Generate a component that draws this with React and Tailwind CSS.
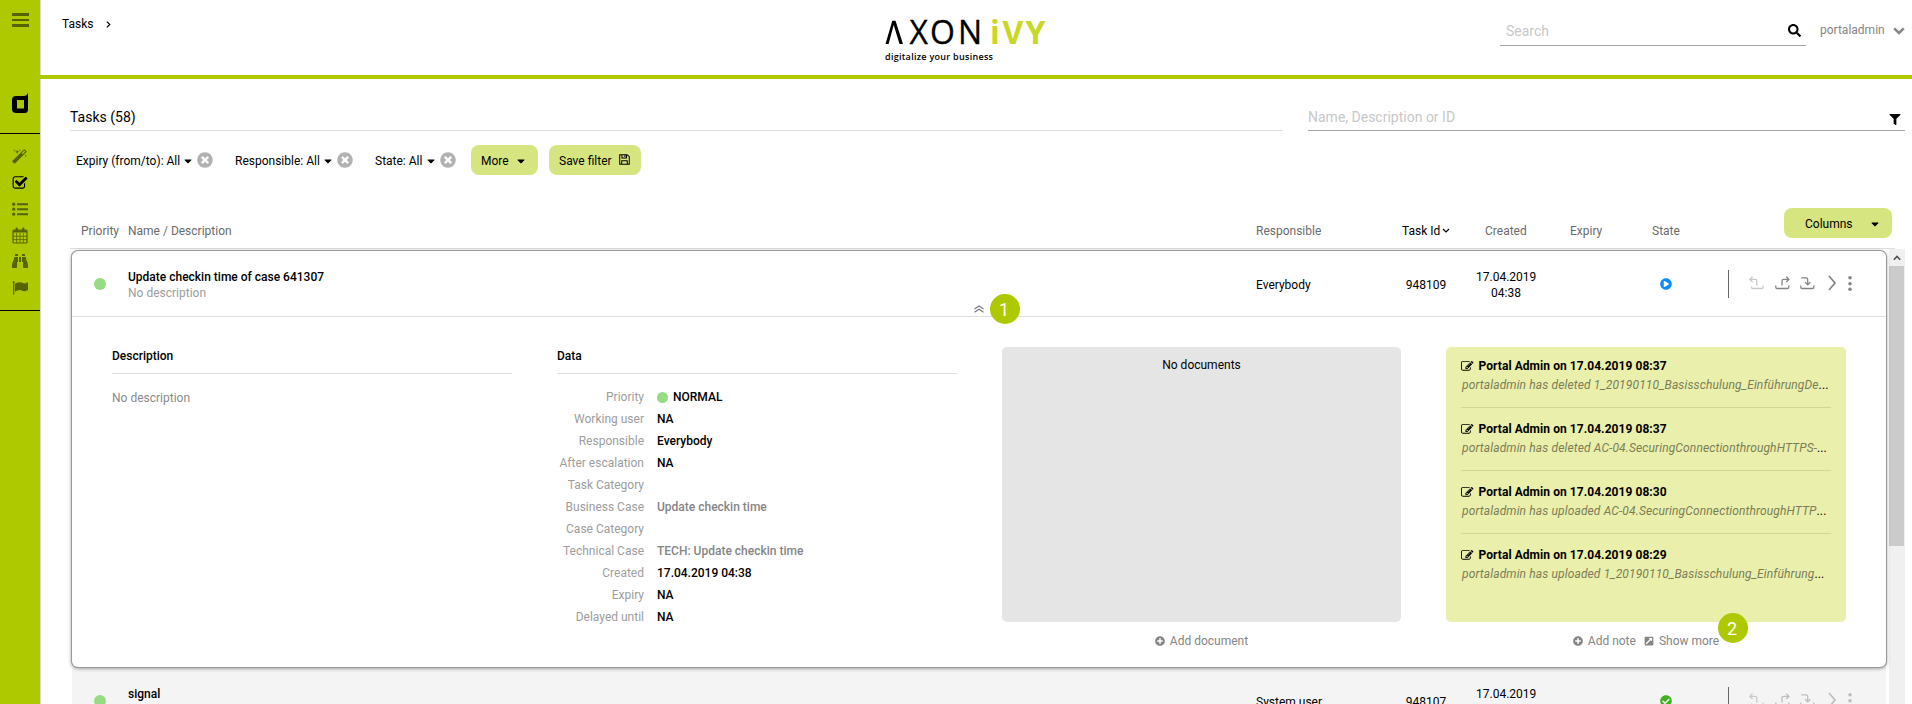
import React from "react";
import { FaBinoculars, FaSearch, FaFilter, FaTimesCircle, FaPlusCircle, FaExternalLinkSquareAlt, FaCaretDown, FaPlayCircle, FaCheckCircle } from "react-icons/fa";

const MAGIC = "M1190 581l293-293-107-107-293 293zm447-293q0 27-18 45l-1286 1286q-18 18-45 18t-45-18l-198-198q-18-18-18-45t18-45l1286-1286q18-18 45-18t45 18l198 198q18 18 18 45zm-1351-190l98 30-98 30-30 98-30-98-98-30 98-30 30-98zm350 162l196 60-196 60-60 196-60-196-196-60 196-60 60-196zm930 478l98 30-98 30-30 98-30-98-98-30 98-30 30-98zm-640-640l98 30-98 30-30 98-30-98-98-30 98-30 30-98z";
const CHECK_SQUARE = "M1472 930v318q0 119-84.5 203.5t-203.500 84.500h-832q-119 0-203.500-84.500t-84.500-203.500v-832q0-119 84.500-203.500t203.500-84.500h832q63 0 117 25 15 7 18 23 3 17-9 29l-49 49q-10 10-23 10-3 0-9-2-23-6-45-6h-832q-66 0-113 47t-47 113v832q0 66 47 113t113 47h832q66 0 113-47t47-113v-254q0-13 9-22l64-64q10-10 23-10 6 0 12 3 20 8 20 29zm231-489l-814 814q-24 24-57 24t-57-24l-430-430q-24-24-24-57t24-57l110-110q24-24 57-24t57 24l263 263 647-647q24-24 57-24t57 24l110 110q24 24 24 57t-24 57z";
const EDIT = "M888 1184l116-116-152-152-116 116v56h96v96h56zm440-720q-16-16-33 1l-350 350q-17 17-1 33t33-1l350-350q17-17 1-33zm80 594v190q0 119-84.500 203.500t-203.500 84.500h-832q-119 0-203.500-84.500t-84.500-203.500v-832q0-119 84.500-203.500t203.500-84.500h832q63 0 117 25 15 7 18 23 3 17-9 29l-49 49q-14 14-32 8-23-6-45-6h-832q-66 0-113 47t-47 113v832q0 66 47 113t113 47h832q66 0 113-47t47-113v-126q0-13 9-22l64-64q15-15 35-7t20 29zm-96-738l288 288-672 672h-288v-288zm444 132l-92 92-288-288 92-92q28-28 68-28t68 28l152 152q28 28 28 68t-28 68z";
const FLAG = "M320 256q0 72-64 110v1266q0 13-9.500 22.500t-22.500 9.500h-64q-13 0-22.500-9.500t-9.500-22.500v-1266q-64-38-64-110 0-53 37.500-90.500t90.500-37.500 90.500 37.500 37.500 90.500zm1472 64v763q0 25-12.500 38.500t-39.500 27.500q-215 116-369 116-61 0-123.500-22t-108.500-48-115.500-48-142.500-22q-192 0-464 146-17 9-33 9-26 0-45-19t-19-45v-742q0-32 31-55 21-14 79-43 236-120 421-120 107 0 200 29t219 88q38 19 88 19 54 0 117.500-21t110-47 88-47 54.500-21q26 0 45 19t19 45z";

function Glyph({ d, className }) {
  return (
    <svg viewBox="0 0 1792 1792" className={className} fill="currentColor">
      <path d={d} />
    </svg>
  );
}

function ListIcon({ className }) {
  return (
    <svg viewBox="0 0 16 14" className={className} fill="currentColor">
      <circle cx="1.700" cy="2.200" r="1.600" />
      <circle cx="1.700" cy="7.200" r="1.600" />
      <circle cx="1.700" cy="12.200" r="1.600" />
      <path d="M5 1.200h11v2H5zM5 6.200h11v2H5zM5 11.200h11v2H5z" />
    </svg>
  );
}

function Calendar({ className }) {
  return (
    <svg viewBox="0 0 16 17" className={className} fill="none" stroke="currentColor">
      <rect x="1" y="3" width="14" height="13" rx="1" strokeWidth="1.200" />
      <path d="M1 4.400h14" strokeWidth="2.200" />
      <path d="M4.600 6v10M8 6v10M11.400 6v10M1 9.300h14M1 12.600h14" strokeWidth=".8" />
      <path d="M4.700 1.500v2.500M11.300 1.500v2.500" strokeWidth="2.200" strokeLinecap="round" />
    </svg>
  );
}

function Floppy({ className }) {
  return (
    <svg viewBox="0 0 12 12" className={className} fill="none" stroke="currentColor" strokeWidth="1.100">
      <path d="M.8.800h8L11.200 3v8.200H.8zM3 11V7.400h6V11M3.200 1v3.400h5V1M6.500 1.200v2.200" />
    </svg>
  );
}

function Actions({ muted }) {
  return (
    <div className={"flex h-4 items-center " + (muted ? "text-[#bdbdbd]" : "text-[#858585]")}>
      <svg viewBox="0 0 15 15" className="-ml-px h-[15px] w-[15px] text-[#cacaca]" fill="none" stroke="currentColor" strokeWidth="1.300">
        <path d="M3.600.8L.9 3.400l2.700 2.600M1 3.400h5.200q1.600 0 1.600 1.600v4.500" />
        <path d="M2.500 10.500v.7q0 1.300 1.300 1.300h9q1.400 0 1.400-1.300V9.600" />
      </svg>
      <svg viewBox="0 0 15 15" className="ml-[11px] h-[15px] w-[15px]" fill="none" stroke="currentColor" strokeWidth="1.300">
        <path d="M11.200.8l2.700 2.600-2.700 2.600M13.800 3.400H8.600Q7 3.400 7 5v4.500M.8 9.600v1.600q0 1.300 1.400 1.300h10.200q1.400 0 1.400-1.300V9.600" />
      </svg>
      <svg viewBox="0 0 15 15" className="ml-[10px] h-[15px] w-[15px]" fill="none" stroke="currentColor" strokeWidth="1.300">
        <path d="M1.200 1.800h4.900q1.600 0 1.600 1.600v5M5 6.100l2.700 2.700 2.700-2.700M.8 9.600v1.600q0 1.300 1.400 1.300h10.200q1.400 0 1.400-1.300V9.600" />
      </svg>
      <svg viewBox="0 0 9 16" className="ml-[13px] h-4 w-[9px]" fill="none" stroke="currentColor" strokeWidth="1.700">
        <path d="M1 1l6 7-6 7" />
      </svg>
      <svg viewBox="0 0 4 16" className="ml-[11px] h-4 w-1" fill="currentColor">
        <circle cx="2" cy="2.800" r="1.800" />
        <circle cx="2" cy="8.800" r="1.800" />
        <circle cx="2" cy="14.200" r="1.800" />
      </svg>
    </div>
  );
}

function Filter({ label, className }) {
  return (
    <div className={"flex items-center " + className}>
      <span className="flex-1 pt-px">{label}</span>
      <FaCaretDown className="mt-px h-3 w-3" />
      <FaTimesCircle className="ml-[3px] h-4 w-4 text-[#b1b1b1]" />
    </div>
  );
}

const rows = [
  ["Priority", "NORMAL"],
  ["Working user", "NA"],
  ["Responsible", "Everybody"],
  ["After escalation", "NA"],
  ["Task Category", ""],
  ["Business Case", "Update checkin time"],
  ["Case Category", ""],
  ["Technical Case", "TECH: Update checkin time"],
  ["Created", "17.04.2019 04:38"],
  ["Expiry", "NA"],
  ["Delayed until", "NA"],
];

const notes = [
  ["08:37", "portaladmin has deleted 1_20190110_Basisschulung_EinführungDe"],
  ["08:37", "portaladmin has deleted AC-04.SecuringConnectionthroughHTTPS-"],
  ["08:30", "portaladmin has uploaded AC-04.SecuringConnectionthroughHTTP"],
  ["08:29", "portaladmin has uploaded 1_20190110_Basisschulung_Einführung"],
];

function Row({ title, sub, who, id, state, muted }) {
  return (
    <div className="flex h-[65px] items-start pt-[18px] leading-4">
      <div className="mt-[9px] ml-[22px] h-3 w-3 shrink-0 rounded-full bg-[#97dc82]" />
      <div className="ml-[22px] w-[1128px]">
        <div className="font-medium">{title}</div>
        <div className="text-[#9d9d9d]">{sub}</div>
      </div>
      <div className="w-[140px] pt-2">{who}</div>
      <div className="w-[60px] pt-2 text-center">{id}</div>
      <div className="ml-5 w-[60px] text-center">17.04.2019<br />04:38</div>
      <div className="ml-[124px] mt-[9px] w-3">{state}</div>
      <div className="ml-[56px] mt-[1px] h-7 w-px bg-[#666]" />
      <div className="ml-[21px] mt-[6px]"><Actions muted={muted} /></div>
    </div>
  );
}

export default function App() {
  return (
    <div className="flex h-[704px] w-[1912px] overflow-hidden bg-white font-['Roboto',sans-serif] text-[12px] text-black">
      <aside className="flex w-10 shrink-0 flex-col items-center bg-[#aec900] text-[#566400] shadow-[1px_0_1px_rgba(0,0,0,0.15)]">
        <div className="mt-[13px] flex w-[17px] flex-col gap-[3px]">
          <div className="h-[2.500px] bg-current" />
          <div className="h-[2.500px] bg-current" />
          <div className="h-[2.500px] bg-current" />
        </div>
        <svg viewBox="0 0 17 20" className="mt-[66px] h-5 w-[17px] text-black" fill="currentColor" fillRule="evenodd">
          <path d="M16 0v16.500a3.500 3.500 0 0 1-3.500 3.500H4a4 4 0 0 1-4-4V7a4 4 0 0 1 4-4h8C13.500 3 15 1.800 16 0zM5 7v8.500h7V7z" />
        </svg>
        <div className="mt-5 flex h-[178px] w-full flex-col items-center border-y border-black pt-[15px]">
          <Glyph d={MAGIC} className="h-4 w-4" />
          <Glyph d={CHECK_SQUARE} className="mt-[10px] h-4 w-4 text-black" />
          <ListIcon className="mt-[11px] h-[14px] w-4" />
          <Calendar className="mt-[11px] h-[17px] w-4" />
          <FaBinoculars className="mt-[9px] h-4 w-4" />
          <Glyph d={FLAG} className="mt-[11px] h-4 w-4" />
        </div>
      </aside>
      <div className="flex min-w-0 flex-1 flex-col">
        <header className="flex h-[79px] shrink-0 border-b-4 border-[#aec900]">
          <div className="flex w-[845px] items-start pl-[22px] pt-4 leading-4">
            Tasks
            <svg viewBox="0 0 5 7" className="ml-3 mt-[5px] h-[7px] w-[5px]" fill="none" stroke="black" strokeWidth="1.200"><path d="M.8.600l3 2.900-3 2.900" /></svg>
          </div>
          <div className="w-[615px]">
            <svg width="164" height="70" viewBox="0 0 164 70">
              <path d="M.5 44L7.300 20.800h3.200L18 44h-3.500L8.700 25 3.600 44z" />
              <text x="24.500 45 73" y="44" fontFamily="Open Sans" fontSize="32" stroke="black" strokeWidth=".3">XON</text>
              <text x="105 117.500 140.500" y="44" fontFamily="Open Sans" fontSize="32" fontWeight="700" fill="#c8d824">iVY</text>
              <text x="0" y="60" fontFamily="Open Sans" fontSize="9" fontWeight="600" textLength="108">digitalize your business</text>
            </svg>
          </div>
          <div className="mt-[15px] flex h-[31px] w-[306px] items-center border-b border-[#a5a5a5] pl-[6px] pr-[5px] text-[14px]">
            <span className="flex-1 pt-0.5 text-[#c8c8c8]">Search</span>
            <FaSearch className="h-[13px] w-[13px]" />
          </div>
          <div className="ml-[14px] mt-[15px] flex h-[30px] items-center text-[#858585]">
            <span className="w-[73px]">portaladmin</span>
            <svg viewBox="0 0 12 8" className="mt-px h-2 w-3" fill="none" stroke="currentColor" strokeWidth="2.500"><path d="M1.200 1.300L6 6l4.800-4.700" /></svg>
          </div>
        </header>
        <div className="flex h-[52px] shrink-0 gap-[25px] pl-[30px] text-[14px]">
          <div className="w-[1213px] border-b border-[#dedede] pt-[28px] leading-5">Tasks (58)</div>
          <div className="flex w-[597px] justify-between border-b border-[#a5a5a5] pr-1 pt-[28px] leading-5">
            <span className="text-[#c8c8c8]">Name, Description or ID</span>
            <FaFilter className="mt-[7px] h-[11px] w-[12px]" />
          </div>
        </div>
        <div className="mt-[14px] flex h-[30px] shrink-0 items-center pl-9">
          <Filter label="Expiry (from/to): All" className="w-[137px]" />
          <Filter label="Responsible: All" className="ml-[22px] w-[118px]" />
          <Filter label="State: All" className="ml-[22px] w-[81px]" />
          <button className="ml-[15px] flex h-[30px] w-[67px] items-center gap-1.5 rounded-lg bg-[#d7e580] pl-[10px] pt-px">More<FaCaretDown className="h-3 w-3" /></button>
          <button className="ml-[11px] flex h-[30px] w-[92px] items-center gap-[7px] rounded-lg bg-[#d7e580] pl-[10px] pt-px">Save filter<Floppy className="-mt-0.5 h-[11px] w-[11px]" /></button>
        </div>
        <div className="ml-[30px] mt-[33px] flex h-[41px] w-[1825px] shrink-0 border-b border-[#dedede] leading-[46px] text-[#6b6b6b]">
          <div className="w-[58px] pl-[11px]">Priority</div>
          <div className="w-[1128px]">Name / Description</div>
          <div className="w-[146px]">Responsible</div>
          <div className="flex w-[83px] items-start text-black">Task Id
            <svg viewBox="0 0 8 6" className="ml-[2px] mt-5 h-[6px] w-2" fill="none" stroke="black" strokeWidth="1.200"><path d="M1 1l3 3 3-3" /></svg>
          </div>
          <div className="w-[85px]">Created</div>
          <div className="w-[82px]">Expiry</div>
          <div className="w-[132px]">State</div>
          <button className="flex h-[30px] w-[108px] items-center justify-between rounded-lg bg-[#d7e580] pl-[21px] pr-[11px] pt-px leading-4 text-black">Columns<FaCaretDown className="h-3 w-3" /></button>
        </div>
        <div className="flex min-h-0 flex-1 pl-[31px]">
          <div className="w-[1818px] shrink-0 pl-px pt-[2px]">
            <div className="relative z-10 h-[416px] w-[1814px] rounded-[6px] bg-white shadow-[0_0_0_1px_#999,0_1px_4px_rgba(0,0,0,0.5)]">
              <div className="relative border-b border-[#dedede]">
                <Row title="Update checkin time of case 641307" sub="No description" who="Everybody" id="948109" state={<FaPlayCircle className="h-3 w-3 text-[#0a8cff]" />} />
                <svg viewBox="0 0 10 8" className="absolute left-[902px] top-[54px] h-2 w-[10px] text-[#777]" fill="none" stroke="currentColor" strokeWidth="1.100"><path d="M.5 4L5 1l4.500 3M.5 7.200L5 4.200l4.500 3" /></svg>
                <div className="absolute left-[918px] top-[43px] flex h-[30px] w-[30px] items-center justify-center rounded-full bg-[#aec900] pr-0.5 text-[18px] text-white">1</div>
              </div>
              <div className="flex gap-[45px] pl-10 pt-[30px]">
                <section className="w-[400px]">
                  <h3 className="h-[27px] border-b border-[#dedede] font-medium leading-[18px]">Description</h3>
                  <p className="mt-[15px] leading-[18px] text-[#8a8a8a]">No description</p>
                </section>
                <section className="w-[400px]">
                  <h3 className="mb-3 h-[27px] border-b border-[#dedede] font-medium leading-[18px]">Data</h3>
                  {rows.map(([k, v]) => (
                    <div key={k} className="flex h-[22px] items-center">
                      <span className="w-[87px] text-right text-[#9d9d9d]">{k}</span>
                      {k === "Priority" && <span className="-mr-2 ml-[13px] h-[11px] w-[11px] rounded-full bg-[#97dc82]" />}
                      <span className={"ml-[13px] font-medium " + (k.endsWith("Case") ? "text-[#858585]" : "")}>{v}</span>
                    </div>
                  ))}
                </section>
                <section className="w-[399px]">
                  <div className="h-[275px] rounded-[5px] bg-[#e5e5e5] pt-[9px] text-center leading-[18px]">No documents</div>
                  <div className="mt-[10px] flex items-center justify-center gap-[5px] leading-[18px] text-[#858585]"><FaPlusCircle className="h-[10px] w-[10px]" />Add document</div>
                </section>
                <section className="relative w-[400px]">
                  <div className="h-[275px] rounded-[5px] bg-[#eaefab] px-[15px]">
                    {notes.map(([t, n], i) => (
                      <div key={i} className={i === 0 ? "h-[61px] border-b border-[#d2d795] pt-[11px]" : i < 3 ? "h-[63px] border-b border-[#d2d795] pt-[13px]" : "h-[63px] pt-[13px]"}>
                        <div className="flex items-center font-bold leading-[17px] tracking-[0.06px]"><Glyph d={EDIT} className="mr-[5px] h-[12.500px] w-[12.500px]" />Portal Admin on 17.04.2019 {t}</div>
                        <div className="whitespace-nowrap pl-px leading-[21px] tracking-[0.13px]"><span className="italic text-[#7b7d58]">{n}</span>...</div>
                      </div>
                    ))}
                  </div>
                  <div className="mt-[10px] flex items-center justify-center leading-[18px] text-[#858585]"><FaPlusCircle className="mr-[5px] h-[10px] w-[10px]" />Add note<FaExternalLinkSquareAlt className="ml-2 mr-[5px] h-[10px] w-[10px]" />Show more</div>
                  <div className="absolute left-[272px] top-[266px] flex h-[30px] w-[30px] items-center justify-center rounded-full bg-[#aec900] pr-0.5 text-[18px] text-white">2</div>
                </section>
              </div>
            </div>
            <div className="w-[1814px] bg-[#f4f4f4] pt-px">
              <Row muted title="signal" sub="" who="System user" id="948107" state={<FaCheckCircle className="h-3 w-3 text-[#3fae1f]" />} />
            </div>
          </div>
          <div className="w-4 bg-[#f0f0f0]">
            <div className="flex h-[17px] items-center justify-center"><svg viewBox="0 0 8 6" className="h-[6px] w-2" fill="none" stroke="#505050" strokeWidth="1.600"><path d="M.8 4.800L4 1.500l3.200 3.300" /></svg></div>
            <div className="h-[280px] w-[15px] bg-[#cbcbcb]" />
          </div>
        </div>
      </div>
    </div>
  );
}
